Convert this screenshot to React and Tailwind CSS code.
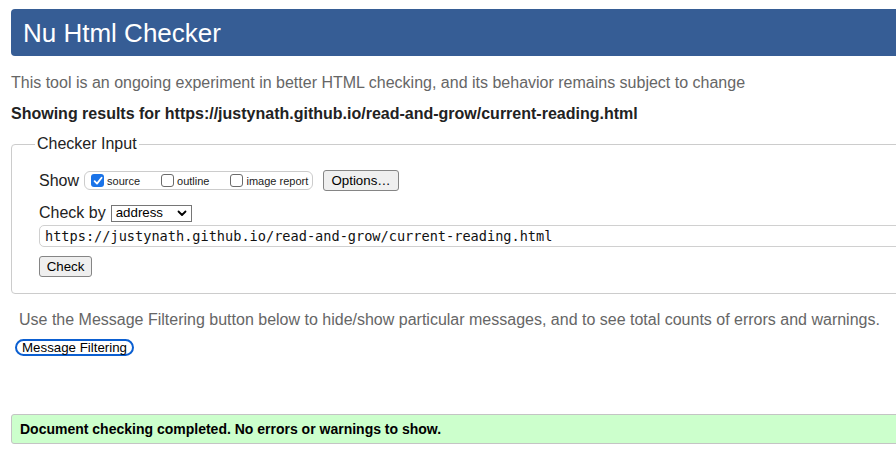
import React from 'react';

const sans = { fontFamily: '"Liberation Sans", Arial, sans-serif' };

const Box = ({ checked, label }) => (
    <span className="flex items-center">
        {checked ? (
            <span className="w-[13px] h-[13px] rounded-[3px] bg-[#1a73e8] flex items-center justify-center">
                <svg width="10" height="10" viewBox="0 0 10 10">
                    <path d="M1.6 5.2 L4 7.6 L8.6 1.8" stroke="white" strokeWidth="1.8" fill="none" strokeLinecap="round" strokeLinejoin="round" />
                </svg>
            </span>
        ) : (
            <span className="w-[13px] h-[13px] rounded-[3px] border border-[#6b6b6b] bg-white"></span>
        )}
        <span className="ml-[3px] mt-[2px] text-[11px] text-[#222]">{label}</span>
    </span>
);

const App = () => {
    return (
        <div className="w-full h-[452px] overflow-hidden bg-white" style={sans}>
            <div className="w-[940px] pl-[11px]">
                <div className="mt-[9px] h-[47px] bg-[#365d95] rounded-[4px] flex items-center pl-[12px]">
                    <h1 className="text-[26px] text-white leading-none">Nu Html Checker</h1>
                </div>

                <p className="mt-[18px] text-[16px] leading-[18px] text-[#666]">
                    This tool is an ongoing experiment in better HTML checking, and its behavior remains subject to change
                </p>
                <p className="mt-[13px] text-[16px] leading-[18px] font-bold text-[#222]">
                    Showing results for https://justynath.github.io/read-and-grow/current-reading.html
                </p>

                <fieldset className="mt-[12px] border border-[#ccc] rounded-[4px] pl-[23px] pb-[15px]">
                    <legend className="px-[2px] text-[16px] leading-[18px] text-[#222]">Checker Input</legend>
                    <div className="pl-[4px]">
                        <div className="mt-[17px] flex items-center h-[21px]">
                            <span className="text-[16px] text-[#222]">Show</span>
                            <div className="ml-[5px] w-[229px] h-[19px] border border-[#ccc] rounded-[6px] flex items-center pl-[6px]">
                                <Box checked label="source" />
                                <span className="ml-[21px]"><Box label="outline" /></span>
                                <span className="ml-[21px]"><Box label="image report" /></span>
                            </div>
                            <button className="ml-[10px] h-[21px] w-[76px] bg-[#efefef] border border-[#858585] rounded-[3px] text-[13.3px] text-black">
                                Options…
                            </button>
                        </div>

                        <div className="mt-[13px] flex items-center h-[18px]">
                            <span className="text-[16px] text-[#222]">Check by</span>
                            <div className="ml-[5px] w-[81px] h-[17px] border border-[#767676] bg-white flex items-center justify-between pl-[4px] pr-[4px]">
                                <span className="text-[13.3px] text-black leading-none">address</span>
                                <svg width="10" height="7" viewBox="0 0 10 7">
                                    <path d="M1.5 1.5 L5 5 L8.5 1.5" stroke="black" strokeWidth="1.8" fill="none" strokeLinecap="round" strokeLinejoin="round" />
                                </svg>
                            </div>
                        </div>

                        <div className="mt-[3px] h-[22px] border border-[#d0d0d0] rounded-[5px] flex items-center pl-[5px]">
                            <span className="text-[13.6px] text-[#111]" style={{ fontFamily: '"DejaVu Sans Mono", monospace' }}>
                                https://justynath.github.io/read-and-grow/current-reading.html
                            </span>
                        </div>

                        <button className="mt-[9px] h-[21px] w-[53px] bg-[#efefef] border border-[#858585] rounded-[3px] text-[13.3px] text-black">
                            Check
                        </button>
                    </div>
                </fieldset>

                <p className="mt-[17px] ml-[8px] text-[16px] leading-[18px] text-[#666]">
                    Use the Message Filtering button below to hide/show particular messages, and to see total counts of errors and warnings.
                </p>
                <button className="mt-[10px] ml-[4px] h-[17px] w-[119px] border-2 border-[#0b5fd1] rounded-full bg-white text-[13.3px] text-black leading-none">
                    Message Filtering
                </button>

                <div className="mt-[55px] h-[30px] border border-[#c4c4c4] rounded-[3px] bg-[#ccffcc] flex items-center pl-[8px]">
                    <span className="text-[14px] font-bold text-black">Document checking completed. No errors or warnings to show.</span>
                </div>
            </div>
        </div>
    );
};

export default App;
